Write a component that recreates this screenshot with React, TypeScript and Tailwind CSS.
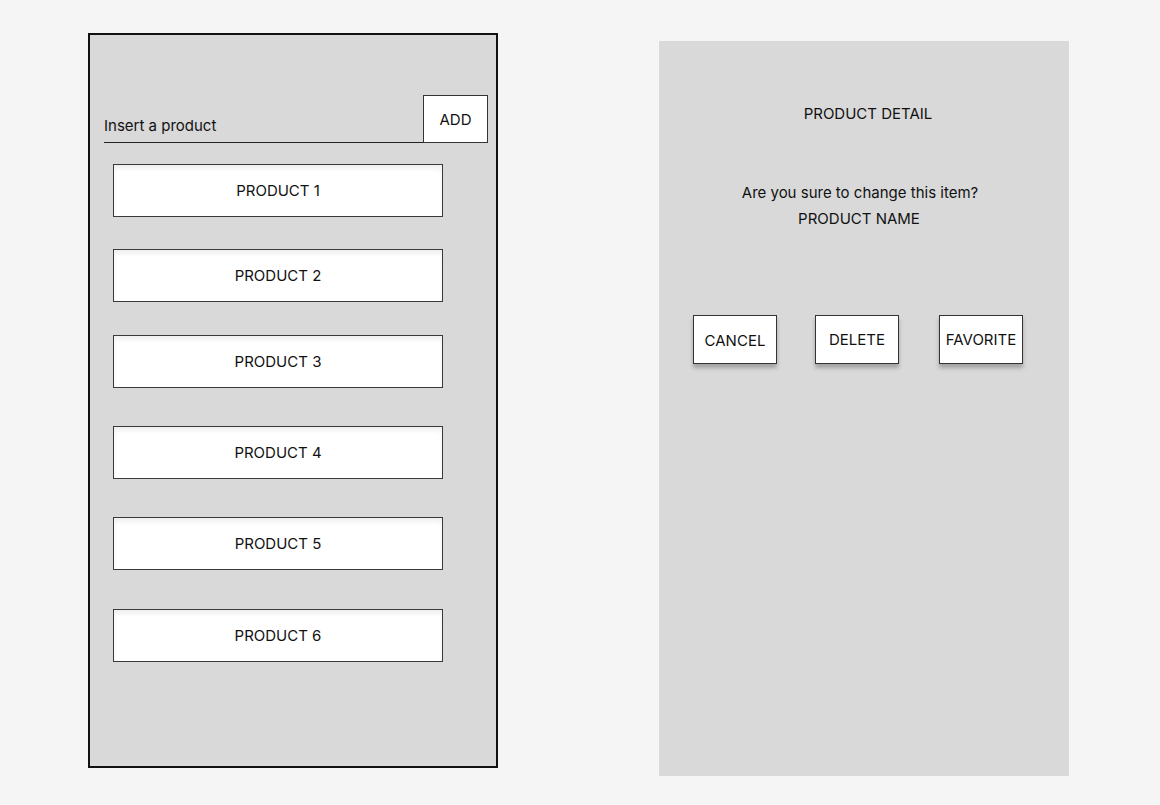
const products = [
  { name: "PRODUCT 1", gap: "mt-[21px]" },
  { name: "PRODUCT 2", gap: "mt-[32px]" },
  { name: "PRODUCT 3", gap: "mt-[33px]" },
  { name: "PRODUCT 4", gap: "mt-[38px]" },
  { name: "PRODUCT 5", gap: "mt-[38px]" },
  { name: "PRODUCT 6", gap: "mt-[39px]" },
];

const App = () => {
  return (
    <div
      className="w-[1160px] h-[805px] bg-[#f5f5f5] flex items-start pl-[88px] pt-[33px] text-[#111]"
      style={{ fontFamily: "Inter, 'Noto Sans', sans-serif" }}
    >
      {/* Product list */}
      <div className="w-[410px] h-[735px] border-2 border-[#111] bg-[#d9d9d9] flex flex-col">
        <div className="flex items-end mt-[60px] ml-[14px] mr-[8px]">
          <div className="flex-1 border-b border-[#222] h-[48px] flex items-end pb-[7px] text-[15px] leading-[18px]">
            Insert a product
          </div>
          <button className="w-[65px] h-[48px] bg-white border border-[#333] text-[15px] leading-[18px] pt-[2px]">
            ADD
          </button>
        </div>
        {products.map((p) => (
          <div
            key={p.name}
            className={`${p.gap} ml-[23px] w-[330px] h-[53px] bg-white border border-[#3a3a3a] shadow-[inset_0_4px_4px_rgba(0,0,0,0.06)] flex items-center justify-center text-[15px] leading-[18px] pt-[1px]`}
          >
            {p.name}
          </div>
        ))}
      </div>

      {/* Detail */}
      <div className="ml-[161px] mt-[8px] w-[410px] h-[735px] bg-[#d9d9d9] flex flex-col items-center">
        <div className="mt-[64px] ml-[8px] text-[15px] leading-[18px]">PRODUCT DETAIL</div>
        <div className="mt-[57px] mr-[8px] text-[15px] leading-[26px] text-center">
          <div>Are you sure to change this item?</div>
          <div className="mr-[2px]">PRODUCT NAME</div>
        </div>
        <div className="mt-[83px] self-start ml-[34px] flex gap-[38px]">
          <button className="w-[84px] h-[49px] bg-white border border-[#333] shadow-[0_4px_4px_rgba(0,0,0,0.25)] text-[15px] leading-[18px] pt-[3px]">
            CANCEL
          </button>
          <button className="w-[84px] h-[49px] bg-white border border-[#333] shadow-[0_4px_4px_rgba(0,0,0,0.25)] text-[15px] leading-[18px]">
            DELETE
          </button>
          <button className="w-[84px] h-[49px] bg-white border border-[#333] shadow-[0_4px_4px_rgba(0,0,0,0.25)] text-[15px] leading-[18px] ml-[2px]">
            FAVORITE
          </button>
        </div>
      </div>
    </div>
  );
};

export default App;
